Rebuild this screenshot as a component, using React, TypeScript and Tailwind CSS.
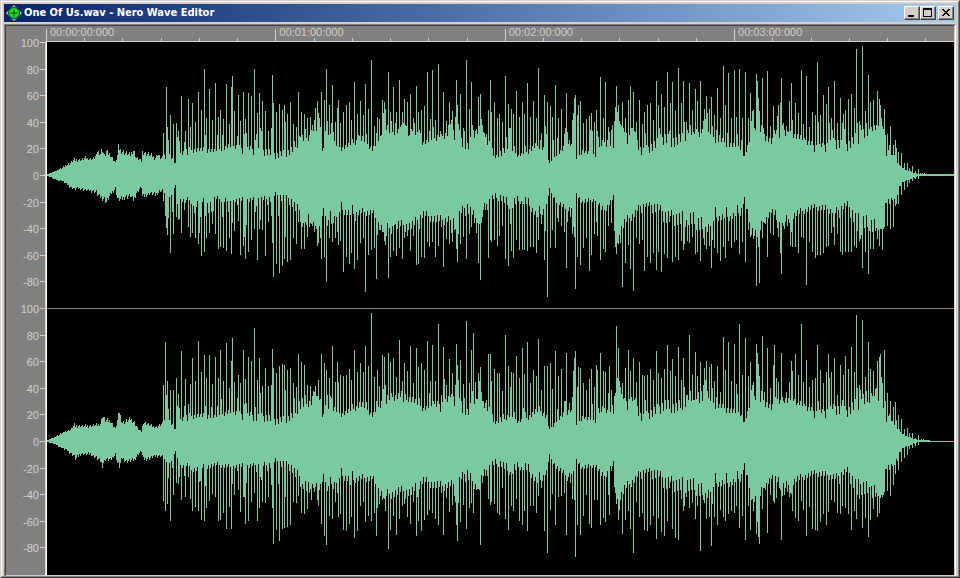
interface Channel {
    id: string;
    base: number[][]; // [x, up, down] quiet envelope
    up: string; // x:height peaks above the zero line
    down: string; // x:height peaks below the zero line
    floor: [number, number];
}

const X_START = 47;
const X_END = 954;
const DRUMS_START = 163;
const FADE_START = 884;

const LEVELS = [100, 80, 60, 40, 20, 0, -20, -40, -60, -80];
const MINUTES = ["00:00:00:000", "00:01:00:000", "00:02:00:000", "00:03:00:000"];

const BODY = [
    [163, 17, 16], [169, 18, 18], [175, 10, 9], [180, 19, 20], [190, 22, 24], [205, 21, 22], [215, 20, 21], [230, 23, 23],
    [250, 21, 23], [268, 20, 22], [275, 17, 18], [290, 20, 22], [300, 32, 34], [314, 38, 46], [323, 23, 28], [330, 32, 38],
    [340, 25, 28], [352, 28, 32], [360, 33, 30], [372, 22, 30], [382, 35, 45], [400, 38, 43], [412, 33, 45], [423, 25, 35],
    [440, 30, 42], [455, 36, 40], [467, 24, 28], [476, 36, 42], [485, 34, 28], [493, 18, 19], [500, 18, 19], [510, 25, 26],
    [518, 18, 21], [527, 22, 23], [538, 28, 34], [546, 22, 25], [549, 10, 12], [556, 18, 21], [570, 27, 33], [576, 14, 15],
    [582, 20, 23], [595, 16, 21], [603, 27, 33], [613, 20, 20], [617, 52, 56], [624, 32, 44], [634, 34, 36], [641, 20, 28],
    [655, 26, 28], [665, 31, 36], [675, 28, 38], [690, 37, 38], [700, 37, 42], [707, 38, 42], [715, 34, 34], [730, 28, 34],
    [740, 25, 30], [744, 16, 19], [750, 32, 42], [757, 46, 50], [764, 34, 38], [771, 28, 31], [784, 38, 40], [797, 31, 34],
    [810, 25, 30], [820, 23, 30], [835, 28, 34], [847, 25, 27], [856, 32, 40], [864, 36, 40], [873, 38, 42], [882, 38, 44],
    [886, 20, 26], [890, 24, 27], [893, 19, 23], [897, 13, 18], [900, 9, 10], [904, 6, 6], [910, 4, 4], [915, 2, 2],
    [918, 1, 1], [926, 1, 1], [934, 0, 0], [954, 0, 0],
];

const CHANNELS: Channel[] = [
    {
        id: "left",
        floor: [1, 1],
        base: [
            [47, 1, 1], [50, 2, 2], [57, 5, 5], [62, 7, 6], [66, 10, 9], [70, 12, 12], [74, 15, 14], [80, 15, 13], [85, 17, 15],
            [92, 16, 16], [96, 19, 17], [97, 24, 20], [100, 22, 22], [102, 26, 23], [104, 19, 24], [106, 23, 27], [110, 20, 20],
            [115, 12, 13], [117, 20, 23], [118, 28, 25], [121, 24, 24], [125, 22, 22], [130, 20, 21], [133, 25, 25],
            [136, 17, 18], [141, 14, 12], [142, 23, 22], [150, 20, 18], [155, 17, 20], [157, 21, 18], [160, 17, 16], ...BODY,
        ],
        up: `163:42 166:88 167:48 168:35 170:60 173:51 176:52 177:38 178:44 179:34 181:79 184:33 185:44 188:76 190:48 192:72
            195:53 198:83 201:65 204:106 205:40 206:57 209:86 212:55 215:92 217:40 218:58 220:65 222:40 223:56 226:91 229:51
            231:88 232:99 234:64 237:39 238:80 240:54 243:83 244:41 245:56 246:42 248:82 251:79 254:106 255:35 256:41 257:62
            259:82 260:47 261:44 262:74 265:64 268:44 271:47 272:100 273:72 276:63 279:71 282:65 284:70 285:53 287:61 290:73
            293:51 296:48 298:83 300:38 301:63 302:40 304:61 307:57 310:58 311:45 312:50 313:44 314:55 315:67 316:44 317:74
            318:62 319:57 320:48 321:83 324:75 325:44 326:106 327:54 328:40 329:70 330:41 331:52 332:90 333:43 335:53 337:67
            338:75 340:52 343:63 346:70 349:73 351:55 352:36 354:93 357:61 358:40 360:74 363:60 365:91 366:41 368:66 371:115
            374:49 376:42 377:58 379:56 380:39 382:75 383:62 384:73 385:66 386:45 387:50 388:103 390:63 391:54 392:43 393:88
            395:52 396:63 398:46 399:95 400:48 402:63 403:52 404:76 405:50 406:49 407:73 409:40 410:81 411:46 413:57 414:52
            415:40 416:89 417:43 418:63 419:45 420:42 421:65 424:69 427:103 429:44 430:56 432:105 433:48 435:55 438:111
            439:38 440:44 441:41 443:83 446:54 448:50 449:73 450:51 451:55 452:64 455:58 456:95 457:70 458:51 459:45 460:81
            463:47 464:44 466:115 469:66 471:93 472:50 473:45 476:46 478:78 479:49 480:81 481:56 482:50 484:42 488:65 490:95
            491:63 494:73 497:57 499:61 502:53 505:99 506:38 508:71 509:47 510:47 511:66 513:61 516:84 519:58 522:73 524:61
            527:92 530:58 533:74 536:57 538:107 540:35 541:42 544:80 545:49 546:41 547:73 550:69 552:58 553:35 555:90 557:37
            558:57 561:66 564:41 565:47 566:82 567:43 569:35 572:55 573:62 574:77 575:80 577:60 578:70 580:74 583:52 586:56
            589:59 590:45 591:62 592:44 594:53 596:65 597:44 598:38 600:98 603:57 605:93 607:35 608:48 609:43 611:45 612:50
            614:54 615:68 616:89 617:63 618:70 619:54 620:51 621:49 622:73 623:47 625:57 626:42 628:75 629:40 630:89 631:47
            632:47 633:83 634:44 636:53 639:75 642:51 644:63 645:42 647:70 650:72 653:55 656:94 658:70 659:47 660:41 661:81
            664:68 667:103 668:41 669:44 670:72 672:93 675:64 678:107 681:72 682:42 683:94 684:53 686:53 687:45 688:42 689:92
            692:65 693:43 695:86 696:46 697:74 698:43 700:94 701:42 702:46 703:54 704:66 705:56 706:79 707:62 709:66 710:41
            711:78 712:49 714:60 716:45 717:87 719:40 720:57 723:109 725:70 727:42 728:102 731:57 734:105 736:58 737:41
            739:106 741:35 742:57 745:103 748:57 750:82 751:54 752:64 753:65 754:47 755:45 756:101 757:94 758:77 759:64
            760:43 762:97 763:47 764:41 767:104 770:49 773:69 774:45 776:45 777:59 778:70 780:72 781:97 782:50 783:52 784:45
            785:39 787:44 789:74 790:44 791:92 792:55 794:41 795:72 798:62 801:105 803:51 804:37 806:99 809:48 812:63 815:60
            817:113 818:53 820:60 823:80 826:71 828:88 829:52 831:57 832:45 834:94 837:52 840:77 842:52 843:61 844:46 845:65
            848:76 851:81 854:67 856:126 857:52 859:54 860:50 861:45 862:129 863:46 865:64 866:52 868:100 869:46 870:73
            872:44 873:75 875:45 876:50 877:84 878:49 879:76 880:70 881:57 882:49 883:46 884:66 885:40 887:41 888:25 889:30
            890:49 893:30 894:20 895:35 896:27 898:23 899:10 901:22 904:12 907:12 909:7 912:9 915:4 918:6 920:2 922:2 924:2`,
        down: `163:26 165:41 166:53 167:60 168:43 170:78 172:37 173:59 176:42 177:29 178:45 179:44 181:58 184:35 188:52 190:62
            192:58 194:38 195:63 196:32 198:69 199:58 200:42 201:81 204:77 205:41 206:63 208:38 209:58 211:37 212:49 213:36
            215:59 218:74 220:72 222:42 223:73 226:76 228:37 229:63 231:79 232:48 234:56 238:46 240:80 243:71 244:62 245:84
            246:50 248:77 251:65 254:54 255:37 257:85 259:54 260:45 262:55 265:81 268:47 271:41 272:68 273:102 276:89 278:41
            279:98 282:91 284:84 285:62 287:87 290:85 293:63 296:69 298:47 300:47 301:74 302:52 304:74 305:47 307:62 310:48
            311:49 312:51 314:57 316:54 317:71 318:68 319:51 320:63 321:84 324:82 326:107 327:51 329:63 331:49 332:67 335:63
            337:57 338:70 340:66 343:97 346:82 349:89 351:78 354:94 355:46 357:85 360:68 363:63 365:117 368:80 371:75 374:73
            376:104 377:60 379:55 382:57 384:66 385:70 386:61 388:103 390:82 391:59 393:76 394:50 396:81 399:73 402:84 404:63
            405:57 407:61 410:76 413:61 416:90 418:89 419:54 421:82 424:83 427:67 429:72 432:67 435:82 438:71 443:92 446:64
            449:69 451:58 452:67 455:54 456:74 457:87 458:59 460:69 463:62 466:84 469:59 471:52 476:58 478:88 480:105 481:48
            488:83 490:65 491:67 494:65 497:71 499:61 502:51 505:84 508:91 510:49 511:76 513:83 516:65 519:75 522:75 524:75
            527:76 530:72 533:72 536:78 538:65 541:49 544:85 545:56 547:122 550:73 552:55 555:73 557:43 558:47 561:51 564:57
            566:93 567:47 572:59 573:52 574:62 575:114 577:82 580:90 583:73 586:63 589:96 591:80 594:59 596:47 597:61 600:85
            603:74 605:77 608:51 611:48 614:56 615:72 616:79 617:68 618:69 619:60 620:68 622:112 625:88 628:70 630:94 633:116
            636:63 639:69 642:65 644:96 647:82 650:88 653:78 656:95 658:77 661:97 664:79 667:83 672:87 675:82 678:85 681:66
            683:75 684:69 687:66 689:68 692:62 695:79 697:77 700:86 703:63 704:70 706:74 709:71 711:93 712:65 714:73 717:78
            720:86 723:72 725:83 728:66 731:73 734:67 736:65 739:79 742:67 745:87 748:55 750:62 751:60 753:64 756:111 757:62
            758:72 759:108 762:63 764:48 767:82 770:58 773:60 777:53 778:62 780:78 781:99 783:51 789:48 790:71 791:57 792:72
            795:72 798:78 801:62 803:63 806:110 809:67 812:77 815:83 817:80 820:80 823:78 826:72 828:71 831:58 833:52 834:70
            837:59 840:77 842:80 845:77 848:77 851:77 854:71 856:73 857:56 859:66 860:64 861:60 862:93 865:77 868:99 869:56
            870:74 873:74 876:53 877:64 879:71 880:54 882:75 884:52 887:51 890:54 893:52 895:31 896:29 898:29 901:20 904:15
            907:12 909:8 912:6 915:4 918:4`,
    },
    {
        id: "right",
        floor: [0, 1],
        base: [
            [47, 1, 1], [50, 2, 2], [58, 6, 5], [66, 10, 9], [70, 11, 12], [74, 16, 15], [75, 15, 18], [80, 15, 13], [90, 15, 13],
            [96, 16, 17], [100, 17, 20], [102, 25, 24], [105, 21, 18], [110, 20, 19], [115, 12, 13], [117, 21, 22],
            [119, 29, 25], [122, 18, 17], [126, 20, 20], [130, 22, 20], [134, 19, 19], [137, 13, 14], [141, 9, 10],
            [143, 19, 18], [150, 16, 17], [155, 14, 15], [160, 16, 15], ...BODY,
        ],
        up: `163:56 165:99 166:46 167:60 168:32 170:51 173:51 176:63 177:35 178:47 179:33 181:90 184:35 185:62 188:37 190:57
            192:83 195:60 198:100 201:69 204:86 205:35 206:63 209:86 211:34 212:57 215:84 217:35 218:63 220:91 221:42 223:60
            226:98 229:53 231:80 232:103 234:59 237:43 238:66 240:58 243:91 244:37 245:62 246:38 248:84 251:80 254:113 255:34
            257:61 259:83 260:48 262:55 265:73 268:55 271:56 272:92 273:73 276:68 279:75 282:77 284:76 285:51 287:71 290:73
            293:58 294:43 296:54 298:87 299:40 301:79 304:76 307:56 310:55 312:45 314:49 315:55 316:45 317:45 318:61 319:41
            320:42 321:87 324:78 325:36 326:71 327:46 329:63 330:45 331:43 332:95 335:59 337:79 338:59 340:66 343:65 346:66
            349:72 351:61 352:37 354:91 357:69 360:78 363:69 365:95 366:39 368:75 371:128 374:64 376:40 377:71 379:55 382:86
            383:52 384:84 385:56 386:37 388:88 389:41 390:79 391:48 393:83 395:46 396:64 399:101 402:60 403:39 404:78 405:47
            406:41 407:70 410:95 413:58 416:93 418:74 419:43 421:78 424:71 427:100 429:48 430:60 432:96 433:40 435:60 438:117
            441:46 443:94 444:62 446:56 449:82 450:44 451:47 452:68 455:56 456:97 457:76 458:61 460:81 461:40 463:57 464:43
            466:120 469:58 471:91 472:50 473:108 475:59 476:42 477:42 478:68 479:60 480:74 481:49 482:40 483:40 488:87 490:87
            491:60 494:72 497:68 499:68 502:50 505:106 508:75 510:54 511:69 513:68 516:85 519:63 522:93 523:33 524:67 527:99
            530:58 533:71 536:65 538:102 539:35 541:51 544:75 547:75 550:78 552:52 555:90 557:32 558:65 561:72 564:40 565:40
            566:88 569:38 572:44 573:70 574:83 575:90 577:54 578:74 580:73 583:58 586:51 589:62 591:72 592:37 594:54 596:76
            597:71 598:33 600:88 603:70 605:69 608:48 609:75 611:51 612:36 614:45 615:48 616:115 617:63 618:93 619:60 620:54
            621:47 622:58 623:42 625:73 628:91 630:70 631:44 632:40 633:83 636:59 639:79 642:66 644:65 645:41 647:66 650:72
            653:61 656:90 658:68 661:63 664:72 667:96 670:70 672:82 675:65 678:94 681:61 683:83 684:54 686:46 688:41 689:106
            692:66 693:41 695:89 696:42 697:65 700:79 703:56 704:73 705:61 706:80 707:50 709:74 710:40 711:77 712:53 714:60
            716:44 717:75 720:49 723:104 725:71 728:99 731:60 734:97 736:57 737:47 739:117 742:66 745:103 748:65 750:79
            751:51 752:56 753:59 754:45 755:41 756:97 757:88 758:77 759:65 760:39 762:105 764:49 767:93 770:53 773:76 774:96
            775:44 776:63 777:42 778:59 780:41 781:88 782:44 783:40 789:59 790:41 791:80 792:70 793:40 795:87 797:38 798:66
            801:117 803:59 804:37 806:81 809:54 812:61 815:63 817:96 818:40 820:71 823:58 826:69 828:87 829:63 831:69 834:83
            837:46 840:76 842:41 843:66 845:85 848:72 851:94 852:39 854:69 856:126 857:53 859:56 860:51 861:42 862:121 865:64
            868:99 869:38 870:72 872:45 873:70 874:45 875:52 876:53 877:80 878:40 879:84 880:87 881:64 882:58 884:91 885:40
            887:48 889:27 890:40 893:34 895:39 896:21 898:26 901:22 904:12 907:13 909:8 912:8 915:3 918:6 921:2 923:2 929:1`,
        down: `163:60 165:70 167:63 168:37 170:80 172:27 173:54 176:42 178:43 179:36 181:59 184:35 185:56 188:36 190:58 192:70
            195:66 198:70 199:41 200:40 201:79 204:80 205:45 206:67 209:60 212:53 215:56 218:80 220:79 223:72 226:88 229:66
            231:88 232:43 234:54 238:49 240:71 243:56 244:56 245:83 246:42 248:80 251:61 254:52 257:80 259:67 260:36 261:39
            262:61 265:62 268:56 271:44 272:67 273:103 276:89 278:43 279:100 282:88 284:87 285:56 287:86 290:84 293:61 296:62
            298:55 300:46 301:72 302:43 304:73 305:40 307:68 308:41 310:48 312:43 314:51 315:46 317:59 318:65 319:49 320:43
            321:83 324:95 326:104 327:50 329:75 331:43 332:78 335:61 337:52 338:76 340:73 343:89 346:90 349:83 350:44 351:76
            354:97 357:90 360:65 363:61 365:81 368:75 371:80 374:72 376:95 377:67 379:63 382:59 384:58 385:70 388:108 390:89
            393:75 396:94 399:78 402:65 404:63 405:58 407:76 410:83 413:61 416:95 417:56 418:80 421:90 424:79 427:74 429:69
            432:72 435:78 438:84 443:94 446:57 449:71 452:64 455:61 456:84 457:100 458:62 460:81 463:64 466:88 469:67 471:62
            473:72 476:49 478:48 480:104 488:58 490:64 491:61 494:63 497:72 499:74 502:47 505:78 508:89 511:65 513:70 516:58
            519:80 522:84 524:70 527:90 530:65 533:65 536:72 538:55 541:47 544:90 547:112 550:69 552:53 555:84 558:56 561:55
            564:52 566:94 572:58 574:59 575:116 577:84 580:94 583:75 586:54 589:83 591:87 594:59 597:59 600:84 603:77 605:81
            608:54 609:74 614:46 615:52 616:63 617:58 618:79 619:69 620:59 622:93 625:79 628:70 630:88 633:112 636:61 639:76
            642:72 644:89 647:90 650:84 653:75 656:98 658:77 661:91 664:95 667:80 672:88 675:97 678:99 681:58 683:70 684:65
            686:56 689:67 692:62 695:78 697:65 700:110 703:59 704:62 706:78 709:76 711:105 712:63 714:76 717:84 720:69 723:76
            725:80 728:73 731:70 734:72 736:65 739:87 742:75 745:99 748:65 750:89 752:58 753:70 756:93 757:81 758:96 759:103
            762:68 764:47 767:92 770:54 773:60 774:62 776:57 780:49 781:99 782:55 789:56 790:52 791:53 792:70 795:77 798:80
            801:60 803:69 806:95 809:66 812:88 815:89 817:90 820:81 823:73 826:84 828:71 831:59 834:61 837:72 840:73 842:65
            845:67 848:73 851:89 854:70 856:78 857:54 859:58 862:87 865:77 868:96 869:46 870:79 873:68 876:52 877:76 879:72
            880:57 882:56 884:51 887:50 890:55 893:44 895:33 898:29 901:21 904:17 907:14 909:8 912:7 915:5 918:4`,
    },
];

function parsePeaks(text: string) {
    const peaks = new Map<number, number>();
    for (const item of text.trim().split(/\s+/)) {
        const [x, height] = item.split(":").map(Number);
        peaks.set(x, height);
    }
    return peaks;
}

function envelopeAt(base: number[][], x: number, side: 1 | 2) {
    const next = base.findIndex((point) => point[0] >= x);
    if (next <= 0) return base[0][side];
    const a = base[next - 1];
    const b = base[next];
    return a[side] + ((b[side] - a[side]) * (x - a[0])) / (b[0] - a[0]);
}

// small ripple so that the quiet parts are not a smooth curve
function ripple(x: number, step: number) {
    const noise = ((x * step) % 11) / 11;
    const loud = x > DRUMS_START && x < FADE_START;
    return loud ? 0.95 + noise * 0.45 : 0.88 + noise * 0.26;
}

function wavePath({ base, up, down, floor }: Channel) {
    const ups = parsePeaks(up);
    const downs = parsePeaks(down);
    let d = "";
    for (let x = X_START; x < X_END; x++) {
        const quietUp = Math.round(envelopeAt(base, x, 1) * ripple(x, 37));
        const quietDown = Math.round(envelopeAt(base, x, 2) * ripple(x, 29));
        const top = Math.max(floor[0], ups.get(x) ?? quietUp);
        const bottom = Math.max(floor[1], downs.get(x) ?? quietDown);
        d += `M${x} ${-top}h1V${bottom}h-1z`;
    }
    return d;
}

function AppIcon() {
    return (
        <svg viewBox="0 0 16 16" className="h-4 w-4 shrink-0" aria-hidden="true">
            <path d="M8 0l3.5 3.5h-7zM8 16l3.5-3.5h-7zM0 8l3.5-3.5v7zM16 8l-3.5-3.5v7z" fill="#b8b4a8" />
            <circle cx="8" cy="8" r="5.5" fill="#10e810" stroke="#1c3a1c" strokeWidth="1" />
            <path d="M8 4.5v7M4.5 8h7" stroke="#064006" strokeWidth="1" />
            <circle cx="8" cy="8" r="1.3" fill="#064006" />
        </svg>
    );
}

const buttonClass =
    "flex h-3.5 w-4 items-center justify-center border border-t-white border-l-white border-r-[#404040] border-b-[#404040] bg-[#d4d0c8] shadow-[inset_-1px_-1px_0_#808080]";

function TitleBar() {
    return (
        <header className="flex h-[18px] items-center bg-linear-to-r from-[#0a246a] to-[#a6caf0] px-0.5">
            <AppIcon />
            <h1 className="ml-0.5 flex-1 truncate text-[11px] leading-4 font-bold text-white">
                One Of Us.wav - Nero Wave Editor
            </h1>
            <button type="button" aria-label="Minimize" className={buttonClass}>
                <svg viewBox="0 0 14 12" className="h-3 w-3.5" shapeRendering="crispEdges">
                    <path d="M3 8h6v2H3z" />
                </svg>
            </button>
            <button type="button" aria-label="Maximize" className={buttonClass}>
                <svg viewBox="0 0 14 12" className="h-3 w-3.5" shapeRendering="crispEdges">
                    <path fillRule="evenodd" d="M2 1h9v9H2zM3 3v6h7V3z" />
                </svg>
            </button>
            <button type="button" aria-label="Close" className={`${buttonClass} ml-0.5`}>
                <svg viewBox="0 0 14 12" className="h-3 w-3.5" shapeRendering="crispEdges">
                    <path d="M3 2h2v1h1v1h2v-1h1v-1h2v1h-1v1h-1v1h-1v1h1v1h1v1h1v1h-2v-1h-1v-1h-2v1h-1v1h-2v-1h1v-1h1v-1h1v-1h-1v-1h-1v-1h-1z" />
                </svg>
            </button>
        </header>
    );
}

function TimeRuler() {
    return (
        <div className="flex h-4 bg-[#808080] pl-10">
            <div className="flex min-w-0 flex-1 overflow-hidden border-b border-[#d4d0c8] pt-[3px]">
                {MINUTES.map((minute) => (
                    <div key={minute} className="flex w-[25.26%] shrink-0 flex-col border-l border-[#d4d0c8]">
                        <span className="h-[9px] pl-[3px] text-[11px] leading-[7px]">{minute}</span>
                        <div className="flex h-[3px]">
                            <i className="flex-1" />
                            <i className="flex-1 border-l border-[#d4d0c8]" />
                            <i className="flex-1 border-l border-[#d4d0c8]" />
                            <i className="flex-1 border-l border-[#d4d0c8]" />
                            <i className="flex-1 border-l border-[#d4d0c8]" />
                            <i className="flex-1 border-l border-[#d4d0c8]" />
                        </div>
                    </div>
                ))}
            </div>
        </div>
    );
}

function LevelScale() {
    return (
        <div className="flex w-[39px] shrink-0 flex-col">
            {LEVELS.map((level) => (
                <div key={level} className="flex flex-1 items-start justify-end gap-px">
                    <span className="-mt-[5px] h-3 text-[11px] leading-3">{level}</span>
                    <i className="h-px w-[5px] bg-[#d4d0c8]" />
                </div>
            ))}
        </div>
    );
}

function Lane({ channel, divided }: { channel: Channel; divided: boolean }) {
    return (
        <div className="flex min-h-0 flex-1">
            <LevelScale />
            <div className="flex min-w-0 flex-1 border-l border-[#d4d0c8]">
                <div className="min-w-0 flex-1 border-l border-white bg-black">
                    <svg
                        viewBox="47 -133 907 266"
                        preserveAspectRatio="none"
                        shapeRendering="crispEdges"
                        className="block h-full w-full"
                        role="img"
                        aria-label={`${channel.id} channel`}
                    >
                        {divided && <path d="M47 -133h907v1h-907z" fill="#808080" />}
                        <path d={wavePath(channel)} fill="#79c9a1" />
                    </svg>
                </div>
            </div>
        </div>
    );
}

export default function App() {
    return (
        <div className="h-screen border border-t-[#d4d0c8] border-l-[#d4d0c8] border-r-[#404040] border-b-[#404040] font-['DejaVu_Sans_Condensed',sans-serif]">
            <div className="flex h-full flex-col border border-t-white border-l-white border-r-[#808080] border-b-[#808080] bg-[#d4d0c8] px-0.5 pt-0.5">
                <TitleBar />
                <main className="mt-0.5 flex min-h-0 flex-1 flex-col border-t border-r border-l border-t-[#808080] border-r-white border-l-[#808080] font-['Liberation_Sans',Arial,sans-serif] text-[#d4d0c8]">
                    <div className="flex min-h-0 flex-1 flex-col border border-t-[#404040] border-r-[#d4d0c8] border-b-[#d4d0c8] border-l-[#404040] bg-[#808080]">
                        <TimeRuler />
                        <div className="flex min-h-0 flex-1 flex-col">
                            {CHANNELS.map((channel, i) => (
                                <Lane key={channel.id} channel={channel} divided={i > 0} />
                            ))}
                            <div className="flex h-px pl-[39px]">
                                <div className="flex-1 border-l-2 border-white bg-black" />
                            </div>
                        </div>
                    </div>
                </main>
            </div>
        </div>
    );
}
